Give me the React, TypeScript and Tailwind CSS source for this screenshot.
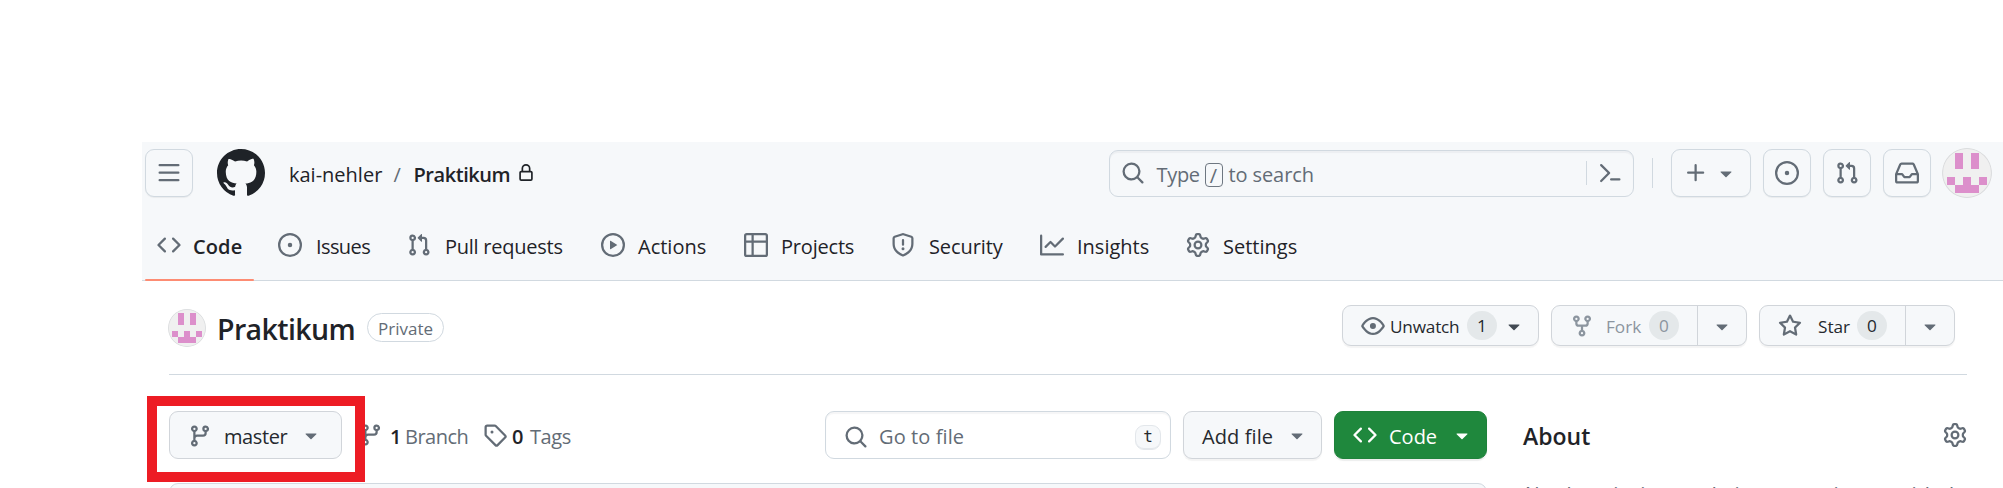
import React from "react";

const P = {
  bars: "M1 2.75A.75.75 0 0 1 1.75 2h12.5a.75.75 0 0 1 0 1.5H1.75A.75.75 0 0 1 1 2.75Zm0 5A.75.75 0 0 1 1.75 7h12.5a.75.75 0 0 1 0 1.5H1.75A.75.75 0 0 1 1 7.75ZM1.75 12h12.5a.75.75 0 0 1 0 1.5H1.75a.75.75 0 0 1 0-1.5Z",
  code: "m11.28 3.22 4.25 4.25a.75.75 0 0 1 0 1.06l-4.25 4.25a.749.749 0 0 1-1.275-.326.749.749 0 0 1 .215-.734L13.94 8l-3.72-3.72a.749.749 0 0 1 .326-1.275.749.749 0 0 1 .734.215Zm-6.56 0a.751.751 0 0 1 1.042.018.751.751 0 0 1 .018 1.042L2.06 8l3.72 3.72a.749.749 0 0 1-.326 1.275.749.749 0 0 1-.734-.215L.47 8.53a.75.75 0 0 1 0-1.06Z",
  issue: "M8 9.5a1.5 1.5 0 1 0 0-3 1.5 1.5 0 0 0 0 3ZM8 0a8 8 0 1 1 0 16A8 8 0 0 1 8 0ZM1.5 8a6.5 6.5 0 1 0 13 0 6.5 6.5 0 0 0-13 0Z",
  pull: "M1.5 3.25a2.25 2.25 0 1 1 3 2.122v5.256a2.251 2.251 0 1 1-1.5 0V5.372A2.25 2.25 0 0 1 1.5 3.25Zm5.677-.177L9.573.677A.25.25 0 0 1 10 .854V2.5h1A2.5 2.5 0 0 1 13.5 5v5.628a2.251 2.251 0 1 1-1.5 0V5a1 1 0 0 0-1-1h-1v1.646a.25.25 0 0 1-.427.177L7.177 3.427a.25.25 0 0 1 0-.354ZM3.75 2.5a.75.75 0 1 0 0 1.5.75.75 0 0 0 0-1.5Zm0 9.5a.75.75 0 1 0 0 1.5.75.75 0 0 0 0-1.5Zm8.25.75a.75.75 0 1 0 1.5 0 .75.75 0 0 0-1.5 0Z",
  play: "M8 0a8 8 0 1 1 0 16A8 8 0 0 1 8 0ZM1.5 8a6.5 6.5 0 1 0 13 0 6.5 6.5 0 0 0-13 0Zm4.879-2.773 4.264 2.559a.25.25 0 0 1 0 .428l-4.264 2.559A.25.25 0 0 1 6 10.559V5.442a.25.25 0 0 1 .379-.215Z",
  table: "M0 1.75C0 .784.784 0 1.75 0h12.5C15.216 0 16 .784 16 1.75v12.5A1.75 1.75 0 0 1 14.25 16H1.75A1.75 1.75 0 0 1 0 14.25ZM6.5 6.5v8h7.75a.25.25 0 0 0 .25-.25V6.5Zm8-1.5V1.75a.25.25 0 0 0-.25-.25H6.5V5Zm-13 1.5v7.75c0 .138.112.25.25.25H5v-8ZM5 5V1.5H1.75a.25.25 0 0 0-.25.25V5Z",
  shield: "M7.467.133a1.748 1.748 0 0 1 1.066 0l5.25 1.68A1.75 1.75 0 0 1 15 3.48V7c0 1.566-.32 3.182-1.303 4.682-.983 1.498-2.585 2.813-5.032 3.855a1.697 1.697 0 0 1-1.33 0c-2.447-1.042-4.049-2.357-5.032-3.855C1.32 10.182 1 8.566 1 7V3.48a1.75 1.75 0 0 1 1.217-1.667Zm.61 1.429a.25.25 0 0 0-.153 0l-5.25 1.68a.25.25 0 0 0-.174.238V7c0 1.358.275 2.666 1.057 3.86.784 1.194 2.121 2.34 4.366 3.297a.196.196 0 0 0 .154 0c2.245-.956 3.582-2.104 4.366-3.298C13.225 9.666 13.5 8.36 13.5 7V3.48a.251.251 0 0 0-.174-.237l-5.25-1.68ZM8.75 4.75v3a.75.75 0 0 1-1.5 0v-3a.75.75 0 0 1 1.5 0ZM9 10.5a1 1 0 1 1-2 0 1 1 0 0 1 2 0Z",
  graph: "M1.5 1.75V13.5h13.75a.75.75 0 0 1 0 1.5H.75a.75.75 0 0 1-.75-.75V1.75a.75.75 0 0 1 1.5 0Zm14.28 2.53-5.25 5.25a.75.75 0 0 1-1.06 0L7 7.06 4.28 9.78a.751.751 0 0 1-1.042-.018.751.751 0 0 1-.018-1.042l3.25-3.25a.75.75 0 0 1 1.06 0L10 7.94l4.72-4.72a.751.751 0 0 1 1.042.018.751.751 0 0 1 .018 1.042Z",
  gear: "M8 0a8.2 8.2 0 0 1 .701.031C9.444.095 9.99.645 10.16 1.29l.288 1.107c.018.066.079.158.212.224.231.114.454.243.668.386.123.082.233.09.299.071l1.103-.303c.644-.176 1.392.021 1.82.63.27.385.506.792.704 1.218.315.675.111 1.422-.364 1.891l-.814.806c-.049.048-.098.147-.088.294.016.257.016.515 0 .772-.01.147.038.246.088.294l.814.806c.475.469.679 1.216.364 1.891a7.977 7.977 0 0 1-.704 1.217c-.428.61-1.176.807-1.82.63l-1.102-.302c-.067-.019-.177-.011-.3.071a5.909 5.909 0 0 1-.668.386c-.133.066-.194.158-.211.224l-.29 1.106c-.168.646-.715 1.196-1.458 1.26a8.006 8.006 0 0 1-1.402 0c-.743-.064-1.289-.614-1.458-1.26l-.289-1.106c-.018-.066-.079-.158-.212-.224a5.738 5.738 0 0 1-.668-.386c-.123-.082-.233-.09-.299-.071l-1.103.303c-.644.176-1.392-.021-1.82-.63a8.12 8.12 0 0 1-.704-1.218c-.315-.675-.111-1.422.363-1.891l.815-.806c.05-.048.098-.147.088-.294a6.214 6.214 0 0 1 0-.772c.01-.147-.038-.246-.088-.294l-.815-.806C.635 6.045.431 5.298.746 4.623a7.92 7.92 0 0 1 .704-1.217c.428-.61 1.176-.807 1.82-.63l1.102.302c.067.019.177.011.3-.071.214-.143.437-.272.668-.386.133-.066.194-.158.211-.224l.29-1.106C6.009.645 6.556.095 7.299.03 7.53.01 7.764 0 8 0Zm-.571 1.525c-.036.003-.108.036-.137.146l-.289 1.105c-.147.561-.549.967-.998 1.189-.173.086-.34.183-.5.29-.417.278-.97.423-1.529.27l-1.103-.303c-.109-.03-.175.016-.195.045-.22.312-.412.644-.573.99-.014.031-.021.11.059.19l.815.806c.411.406.562.957.53 1.456a4.709 4.709 0 0 0 0 .582c.032.499-.119 1.05-.53 1.456l-.815.806c-.081.08-.073.159-.059.19.162.346.353.677.573.989.02.03.085.076.195.046l1.102-.303c.56-.153 1.113-.008 1.53.27.161.107.328.204.501.29.447.222.85.629.997 1.189l.289 1.105c.029.109.101.143.137.146a6.6 6.6 0 0 0 1.142 0c.036-.003.108-.036.137-.146l.289-1.105c.147-.561.549-.967.998-1.189.173-.086.34-.183.5-.29.417-.278.97-.423 1.529-.27l1.103.303c.109.029.175-.016.195-.045.22-.313.411-.644.573-.99.014-.031.021-.11-.059-.19l-.815-.806c-.411-.406-.562-.957-.53-1.456a4.709 4.709 0 0 0 0-.582c-.032-.499.119-1.05.53-1.456l.815-.806c.081-.08.073-.159.059-.19a6.464 6.464 0 0 0-.573-.989c-.02-.03-.085-.076-.195-.046l-1.102.303c-.56.153-1.113.008-1.53-.27a4.44 4.44 0 0 0-.501-.29c-.447-.222-.85-.629-.997-1.189l-.289-1.105c-.029-.11-.101-.143-.137-.146a6.6 6.6 0 0 0-1.142 0ZM11 8a3 3 0 1 1-6 0 3 3 0 0 1 6 0ZM9.5 8a1.5 1.5 0 1 0-3.001.001A1.5 1.5 0 0 0 9.5 8Z",
  search: "M10.68 11.74a6 6 0 0 1-7.922-8.982 6 6 0 0 1 8.982 7.922l3.04 3.04a.749.749 0 0 1-.326 1.275.749.749 0 0 1-.734-.215ZM11.5 7a4.499 4.499 0 1 0-8.997 0A4.499 4.499 0 0 0 11.5 7Z",
  plus: "M7.75 2a.75.75 0 0 1 .75.75V7h4.25a.75.75 0 0 1 0 1.5H8.5v4.25a.75.75 0 0 1-1.5 0V8.5H2.75a.75.75 0 0 1 0-1.5H7V2.75A.75.75 0 0 1 7.75 2Z",
  down: "m4.427 7.427 3.396 3.396a.25.25 0 0 0 .354 0l3.396-3.396A.25.25 0 0 0 11.396 7H4.604a.25.25 0 0 0-.177.427Z",
  inbox: "M2.8 2.06A1.75 1.75 0 0 1 4.41 1h7.18c.7 0 1.333.417 1.61 1.06l2.74 6.395c.04.093.06.194.06.295v4.5A1.75 1.75 0 0 1 14.25 15H1.75A1.75 1.75 0 0 1 0 13.25v-4.5c0-.101.02-.202.06-.295Zm1.61.44a.25.25 0 0 0-.23.152L1.887 8H4.75a.75.75 0 0 1 .6.3L6.625 10h2.75l1.275-1.7a.75.75 0 0 1 .6-.3h2.863L11.82 2.652a.25.25 0 0 0-.23-.152Zm10.09 7h-2.875l-1.275 1.7a.75.75 0 0 1-.6.3h-3.5a.75.75 0 0 1-.6-.3L4.375 9.5H1.5v3.75c0 .138.112.25.25.25h12.5a.25.25 0 0 0 .25-.25Z",
  eye: "M8 2c1.981 0 3.671.992 4.933 2.078 1.27 1.091 2.187 2.345 2.637 3.023a1.62 1.62 0 0 1 0 1.798c-.45.678-1.367 1.932-2.637 3.023C11.67 13.008 9.981 14 8 14c-1.981 0-3.671-.992-4.933-2.078C1.797 10.83.88 9.576.43 8.898a1.62 1.62 0 0 1 0-1.798c.45-.677 1.367-1.931 2.637-3.022C4.33 2.992 6.019 2 8 2ZM1.679 7.932a.12.12 0 0 0 0 .136c.411.622 1.241 1.75 2.366 2.717C5.176 11.758 6.527 12.5 8 12.5c1.473 0 2.825-.742 3.955-1.715 1.124-.967 1.954-2.096 2.366-2.717a.12.12 0 0 0 0-.136c-.412-.621-1.242-1.75-2.366-2.717C10.824 4.242 9.473 3.5 8 3.5c-1.473 0-2.825.742-3.955 1.715-1.124.967-1.954 2.096-2.366 2.717ZM8 10a2 2 0 1 1-.001-3.999A2 2 0 0 1 8 10Z",
  fork: "M5 5.372v.878c0 .414.336.75.75.75h4.5a.75.75 0 0 0 .75-.75v-.878a2.25 2.25 0 1 1 1.5 0v.878a2.25 2.25 0 0 1-2.25 2.25h-1.5v2.128a2.251 2.251 0 1 1-1.5 0V8.5h-1.5A2.25 2.25 0 0 1 3.5 6.25v-.878a2.25 2.25 0 1 1 1.5 0ZM5 3.25a.75.75 0 1 0-1.5 0 .75.75 0 0 0 1.5 0Zm6.75.75a.75.75 0 1 0 0-1.5.75.75 0 0 0 0 1.5Zm-3 8.75a.75.75 0 1 0-1.5 0 .75.75 0 0 0 1.5 0Z",
  star: "M8 .25a.75.75 0 0 1 .673.418l1.882 3.815 4.21.612a.75.75 0 0 1 .416 1.279l-3.046 2.97.719 4.192a.751.751 0 0 1-1.088.791L8 12.347l-3.766 1.98a.75.75 0 0 1-1.088-.79l.72-4.194L.818 6.374a.75.75 0 0 1 .416-1.28l4.21-.611L7.327.668A.75.75 0 0 1 8 .25Zm0 2.445L6.615 5.5a.75.75 0 0 1-.564.41l-3.097.45 2.24 2.184a.75.75 0 0 1 .216.664l-.528 3.084 2.769-1.456a.75.75 0 0 1 .698 0l2.77 1.456-.53-3.084a.75.75 0 0 1 .216-.664l2.24-2.183-3.096-.45a.75.75 0 0 1-.564-.41L8 2.694Z",
  branch: "M9.5 3.25a2.25 2.25 0 1 1 3 2.122V6A2.5 2.5 0 0 1 10 8.5H6a1 1 0 0 0-1 1v1.128a2.251 2.251 0 1 1-1.5 0V5.372a2.25 2.25 0 1 1 1.5 0v1.836A2.493 2.493 0 0 1 6 7h4a1 1 0 0 0 1-1v-.628A2.25 2.25 0 0 1 9.5 3.25Zm-6 0a.75.75 0 1 0 1.5 0 .75.75 0 0 0-1.5 0Zm8.25-.75a.75.75 0 1 0 0 1.5.75.75 0 0 0 0-1.5ZM4.25 12a.75.75 0 1 0 0 1.5.75.75 0 0 0 0-1.5Z",
  tag: "M1 7.775V2.75C1 1.784 1.784 1 2.75 1h5.025c.464 0 .91.184 1.238.513l6.25 6.25a1.75 1.75 0 0 1 0 2.474l-5.026 5.026a1.75 1.75 0 0 1-2.474 0l-6.25-6.25A1.752 1.752 0 0 1 1 7.775Zm1.5 0c0 .066.026.13.073.177l6.25 6.25a.25.25 0 0 0 .354 0l5.025-5.025a.25.25 0 0 0 0-.354l-6.25-6.25a.25.25 0 0 0-.177-.073H2.75a.25.25 0 0 0-.25.25ZM6 5a1 1 0 1 1 0 2 1 1 0 0 1 0-2Z",
  lock: "M4 4a4 4 0 0 1 8 0v2h.25c.966 0 1.75.784 1.75 1.75v5.5A1.75 1.75 0 0 1 12.25 15h-8.5A1.75 1.75 0 0 1 2 13.25v-5.5C2 6.784 2.784 6 3.75 6H4Zm8.25 3.5h-8.5a.25.25 0 0 0-.25.25v5.5c0 .138.112.25.25.25h8.5a.25.25 0 0 0 .25-.25v-5.5a.25.25 0 0 0-.25-.25ZM10.5 6V4a2.5 2.5 0 1 0-5 0v2Z",
  command: "m6.354 8.04-4.773 4.773a.75.75 0 1 0 1.061 1.06L7.945 8.57a.75.75 0 0 0 0-1.06L2.642 2.206a.75.75 0 0 0-1.06 1.061L6.353 8.04ZM8.75 11.5a.75.75 0 0 0 0 1.5h5.5a.75.75 0 0 0 0-1.5h-5.5Z",
  github: "M8 0c4.42 0 8 3.58 8 8a8.013 8.013 0 0 1-5.45 7.59c-.4.08-.55-.17-.55-.38 0-.27.01-1.13.01-2.2 0-.75-.25-1.23-.54-1.48 1.78-.2 3.65-.88 3.65-3.95 0-.88-.31-1.59-.82-2.15.08-.2.36-1.02-.08-2.12 0 0-.67-.22-2.2.82-.64-.18-1.32-.27-2-.27-.68 0-1.36.09-2 .27-1.53-1.03-2.2-.82-2.2-.82-.44 1.1-.16 1.92-.08 2.12-.51.56-.82 1.28-.82 2.15 0 3.06 1.86 3.75 3.64 3.95-.23.2-.44.55-.51 1.07-.46.21-1.61.55-2.33-.66-.15-.24-.6-.83-1.23-.82-.67.01-.27.38.01.53.34.19.73.9.82 1.13.16.45.68 1.31 2.69.94 0 .67.01 1.3.01 1.49 0 .21-.15.45-.55.38A7.995 7.995 0 0 1 0 8c0-4.42 3.58-8 8-8Z",
};

function Icon({ d, className = "" }: { d: string; className?: string }) {
  return (
    <svg viewBox="0 0 16 16" fill="currentColor" className={`size-6 shrink-0 ${className}`} aria-hidden="true">
      <path d={d} />
    </svg>
  );
}

function Avatar({ className }: { className: string }) {
  return (
    <svg viewBox="0 0 50 50" className={`shrink-0 rounded-full ${className}`} shapeRendering="crispEdges" aria-hidden="true">
      <rect width="50" height="50" fill="#f0f0f0" />
      <path
        fill="#dc8fcb"
        d="M13 5h8v16h-8zM29 5h8v16h-8zM5 29h8v8H5zM21 29h8v8h-8zM37 29h8v8h-8zM13 37h24v8H13z"
      />
      <circle cx="25" cy="25" r="24.5" fill="none" stroke="#dadcde" strokeWidth="1.2" shapeRendering="auto" />
    </svg>
  );
}

function Label({ className, children }: { className: string; children: React.ReactNode }) {
  return <span className={`block shrink-0 text-left whitespace-nowrap ${className}`}>{children}</span>;
}

const headerBtn =
  "flex h-12 shrink-0 items-center rounded-[9px] border border-[#d1d9e0] bg-[#f6f8fa] text-[#636c76] shadow-[0_1px_1px_rgba(31,35,40,0.06)]";
const repoBtn =
  "flex h-[41px] shrink-0 items-center rounded-[9px] border border-[#d1d5da] bg-[#f6f8fa] text-[17.2px] text-[#25292e] shadow-[0_2px_1px_rgba(31,35,40,0.05)]";
const badge = "flex h-[29px] w-[30px] shrink-0 items-center justify-center rounded-full bg-[#e4e8ea] pt-px";

const tabs = [
  { icon: P.code, label: "Code", slot: "w-[121px]", gap: "ml-3", text: "font-semibold tracking-[0.1px]", active: true },
  { icon: P.issue, label: "Issues", slot: "w-[129px]", gap: "ml-[14px]", text: "tracking-[-0.6px]" },
  { icon: P.pull, label: "Pull requests", slot: "w-[194px]", gap: "ml-[14px]", text: "tracking-[-0.25px]" },
  { icon: P.play, label: "Actions", slot: "w-[143px]", gap: "ml-[13px]", text: "" },
  { icon: P.table, label: "Projects", slot: "w-[147px]", gap: "ml-[13px]", text: "tracking-[-0.2px]" },
  { icon: P.shield, label: "Security", slot: "w-[149px]", gap: "ml-[14px]", text: "tracking-[-0.1px]" },
  { icon: P.graph, label: "Insights", slot: "w-[146px]", gap: "ml-[13px]", text: "" },
  { icon: P.gear, label: "Settings", slot: "w-[130px]", gap: "ml-[13px]", text: "" },
];

export default function App() {
  return (
    <div className="relative h-[488px] w-[2003px] overflow-hidden bg-white pt-[142px] pl-[142px] font-['Open_Sans','Noto_Sans',sans-serif] text-[20px] leading-none text-[#1f2328]">
      <header className="flex h-[139px] flex-col border-b border-[#d1d9e0] bg-[#f6f8fa]">
        <div className="mt-1.5 flex h-[50px] items-center pl-[3px]">
          <button className={`${headerBtn} w-12 justify-center`}>
            <Icon d={P.bars} />
          </button>
          <Icon d={P.github} className="ml-6 size-12!" />
          <Label className="ml-[24px] w-[104.5px] pt-[3px]">kai-nehler</Label>
          <Label className="w-[20px] pt-[3px] text-[#636c76]">/</Label>
          <Label className="w-[103px] pt-[3px] font-semibold tracking-[-0.45px]">Praktikum</Label>
          <Icon d={P.lock} className="mb-[1px] size-[18px]!" />
          <div className="ml-[574px] flex h-[47px] w-[525px] shrink-0 items-center rounded-[9px] border border-[#d1d9e0] bg-[#f6f8fa] text-[#636c76] shadow-[inset_0_2px_1px_rgba(31,35,40,0.04)]">
            <Icon d={P.search} className="ml-[11px]" />
            <Label className="ml-3 w-[48px] pt-[3px] tracking-[-0.3px]">Type</Label>
            <span className="mt-1 flex h-6 w-[18px] shrink-0 items-center justify-center rounded-[4px] border border-[#6e7781] pt-0.5">
              /
            </span>
            <Label className="ml-[6px] flex-1 pt-[3px] tracking-[-0.1px]">to search</Label>
            <span className="h-6 w-px bg-[#d1d9e0]" />
            <Icon d={P.command} className="mr-[11px] ml-[11px]" />
          </div>
          <span className="ml-[18px] h-[30px] w-px shrink-0 bg-[#d1d9e0]" />
          <button className={`${headerBtn} ml-[18px] w-20 pl-[12px]`}>
            <Icon d={P.plus} />
            <Icon d={P.down} className="ml-1.5" />
          </button>
          <button className={`${headerBtn} ml-3 w-12 justify-center`}>
            <Icon d={P.issue} />
          </button>
          <button className={`${headerBtn} ml-3 w-12 justify-center`}>
            <Icon d={P.pull} />
          </button>
          <button className={`${headerBtn} ml-3 w-12 justify-center`}>
            <Icon d={P.inbox} />
          </button>
          <Avatar className="ml-[11px] size-[50px]" />
        </div>
        <nav className="mt-[11px] flex flex-1 pl-[3px]">
          {tabs.map((t) => (
            <a key={t.label} className={`relative flex h-[72px] shrink-0 items-center pl-3 ${t.slot}`}>
              <Icon d={t.icon} className="text-[#636c76]" />
              <Label className={`pt-[3px] ${t.gap} ${t.text}`}>{t.label}</Label>
              {t.active && <span className="absolute bottom-0 left-0 h-0.5 w-[109px] rounded-full bg-[#fd8c73]" />}
            </a>
          ))}
        </nav>
      </header>

      <section className="ml-[27px] flex h-[94px] w-[1798px] items-center border-b border-[#d1d9e0]">
        <Avatar className="-ml-[1px] size-[38px]" />
        <h1 className="ml-[11px] w-[150px] shrink-0 pt-[3px] text-[28.5px] font-semibold tracking-[-0.6px] whitespace-nowrap">
          Praktikum
        </h1>
        <span className="flex h-[29px] w-[77px] shrink-0 items-center justify-center rounded-full border border-[#d1d9e0] pt-0.5 text-[17px] text-[#636c76]">
          Private
        </span>
        <div className="ml-auto flex h-full pt-6 pr-[12px]">
          <button className={`${repoBtn} w-[197px] pl-[18px]`}>
            <Icon d={P.eye} className="text-[#636c76]" />
            <Label className="ml-[5px] w-[77px] pt-0.5 tracking-[-0.2px]">Unwatch</Label>
            <span className={badge}>1</span>
            <Icon d={P.down} className="ml-[5px] text-[#424a53]" />
          </button>
          <div className={`${repoBtn} ml-3 w-[196px] pl-[18px]`}>
            <Icon d={P.fork} className="text-[#8c959f]" />
            <Label className="ml-[12px] w-[43px] pt-0.5 text-[#8c959f]">Fork</Label>
            <span className={`${badge} text-[#8c959f]`}>0</span>
            <span className="ml-[18px] h-full w-px shrink-0 bg-[#d1d5da]" />
            <Icon d={P.down} className="ml-3 text-[#636c76]" />
          </div>
          <div className={`${repoBtn} ml-3 w-[196px] pl-[18px]`}>
            <Icon d={P.star} className="text-[#636c76]" />
            <Label className="ml-[16px] w-[39px] pt-0.5">Star</Label>
            <span className={badge}>0</span>
            <span className="ml-[18px] h-full w-px shrink-0 bg-[#d1d5da]" />
            <Icon d={P.down} className="ml-3 text-[#636c76]" />
          </div>
        </div>
      </section>

      <main className="ml-[27px] flex items-start">
        <div className="w-[1318px] shrink-0 pt-9">
          <div className="flex h-12 items-center">
            <button className="flex h-12 w-[173px] shrink-0 items-center rounded-[9px] border border-[#d1d5da] bg-[#f6f8fa] pl-[18px] text-[#636c76]">
              <Icon d={P.branch} className="mt-0.5" />
              <Label className="ml-3 w-[75px] pt-[3px] tracking-[-0.4px] text-[#25292e]">master</Label>
              <Icon d={P.down} className="mb-px" />
            </button>
            <Icon d={P.branch} className="ml-[17px] text-[#636c76]" />
            <Label className="ml-[7px] w-[15px] pt-[3px] font-semibold">1</Label>
            <Label className="w-[78px] pt-[3px] tracking-[-0.5px] text-[#636c76]">Branch</Label>
            <Icon d={P.tag} className="text-[#636c76]" />
            <Label className="ml-[5px] w-[18px] pt-[3px] font-semibold">0</Label>
            <Label className="pt-[3px] tracking-[-0.4px] text-[#636c76]">Tags</Label>
            <div className="ml-auto flex h-12 w-[346px] shrink-0 items-center rounded-[9px] border border-[#d1d9e0] bg-white text-[#636c76] shadow-[inset_0_2px_1px_rgba(31,35,40,0.04)]">
              <Icon d={P.search} className="mt-1 ml-[18px]" />
              <Label className="ml-[11px] flex-1 pt-[3px] tracking-[0.1px]">Go to file</Label>
              <span className="mt-1 mr-[9px] flex h-[25px] w-[26px] items-center justify-center rounded-[9px] border border-[#e3e7eb] bg-[#f6f8fa] text-[16px] text-[#25292e] shadow-[inset_0_-1px_0_#e3e7eb]">
                <span className="font-['DejaVu_Sans_Mono',monospace]">t</span>
              </span>
            </div>
            <button className="ml-3 flex h-12 w-[139px] shrink-0 items-center rounded-[9px] border border-[#d1d5da] bg-[#f6f8fa] pl-[18px] text-[#25292e] shadow-[0_2px_1px_rgba(31,35,40,0.05)]">
              <Label className="w-[83px] pt-[3px] tracking-[0.1px]">Add file</Label>
              <Icon d={P.down} className="text-[#636c76]" />
            </button>
            <button className="ml-3 flex h-12 w-[153px] shrink-0 items-center rounded-[9px] border border-[#1f823b] bg-[#1f883d] pl-[18px] text-white shadow-[0_2px_1px_rgba(31,35,40,0.08)]">
              <Icon d={P.code} />
              <Label className="ml-3 w-[61px] pt-[3px]">Code</Label>
              <Icon d={P.down} />
            </button>
          </div>
          <div className="mt-6 h-10 rounded-t-[9px] border border-[#d1d9e0] bg-[#f6f8fa]" />
        </div>
        <aside className="ml-9 w-[444px] shrink-0 pt-12">
          <div className="flex h-6 items-center justify-between">
            <h2 className="pt-[3px] text-[23px] font-semibold">About</h2>
            <Icon d={P.gear} className="text-[#636c76]" />
          </div>
          <p className="mt-[34px] text-[21px] leading-[28px] tracking-[0.85px] whitespace-nowrap text-[#636c76] italic">
            No description, website, or topics provided.
          </p>
        </aside>
      </main>

      <div className="absolute top-[396px] left-[147px] h-[86px] w-[218px] border-10 border-[#ed1c24]" />
    </div>
  );
}
